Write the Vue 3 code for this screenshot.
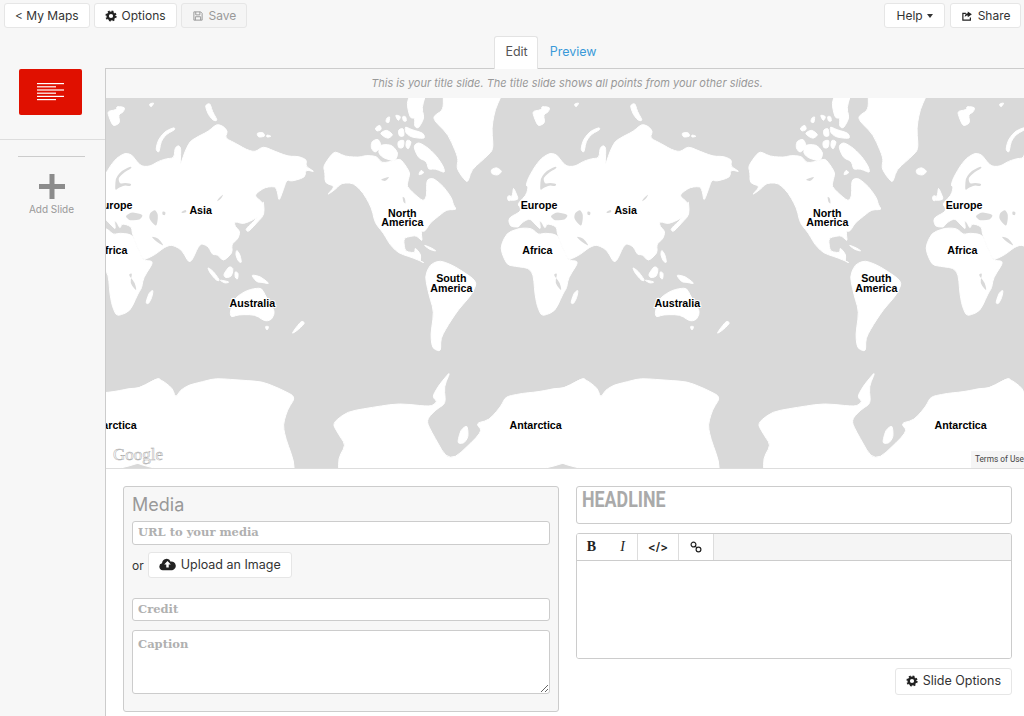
<script setup>
const offsets = [-2550, -1275, 0, 1275]

// the traced outlines are plain polygons, this rounds every corner a little
function smooth(d) {
  const n = d.replace(/[MZ]/g, '').trim().split(/\s+/).map(Number)
  const pts = []
  for (let i = 0; i < n.length; i += 2) pts.push([n[i], n[i + 1]])
  const mix = (a, b, t) => `${(a[0] + (b[0] - a[0]) * t).toFixed(1)} ${(a[1] + (b[1] - a[1]) * t).toFixed(1)}`
  let out = ''
  pts.forEach((p, i) => {
    const prev = pts[(i + pts.length - 1) % pts.length]
    const next = pts[(i + 1) % pts.length]
    out += `${i ? 'L' : 'M'}${mix(p, prev, 0.35)} Q${p[0]} ${p[1]} ${mix(p, next, 0.35)} `
  })
  return out + 'Z'
}

// old world, traced around the copy at x 500..740 of the page
const oldWorld = [
  'M25 360 60 342 62 330 52 318 78 292 85 268 78 262 85 240 105 205 125 180 150 165 170 170 185 190 200 205 225 205 250 190 275 182 297 180 300 150 310 142 318 150 315 205 330 160 345 130 370 115 400 100 425 78 445 85 458 100 450 120 480 135 515 155 540 162 565 145 600 160 640 175 670 175 695 185 692 205 720 222 692 215 690 238 650 250 635 245 625 275 612 310 607 280 600 265 570 268 545 285 540 295 565 315 560 350 535 365 505 378 478 370 480 385 495 400 490 420 480 430 470 440 472 465 445 490 428 470 412 470 400 445 375 435 345 500 320 455 290 440 268 448 240 470 205 487 185 440 172 408 170 388 155 380 140 378 135 392 125 372 118 368 122 395 105 378 90 362 75 368 62 378 55 388 30 385Z',
  // africa
  'M0 450 20 405 60 390 95 391 115 410 135 405 172 410 185 445 205 487 237 490 205 540 200 570 190 585 165 640 125 655 112 625 105 590 100 530 85 510 45 505 20 500Z',
  // australia
  'M465 640 480 600 510 580 535 572 560 570 575 600 600 640 590 665 570 670 540 650 490 650 468 658Z',
  // britain, ireland, svalbard and the rest
  'M40 268 48 285 56 305 28 308 38 290Z',
  'M22 295 32 292 32 308 24 308Z',
  'M97 40 125 35 125 25 150 28 145 42 130 50 135 75 115 85 105 65Z',
  'M222 18 238 14 228 28Z',
  'M390 22 405 15 412 40 428 68 415 68 400 50Z',
  'M298 88 270 100 250 125 242 155 252 165 258 130 275 108 300 95Z',
  'M545 105 565 103 570 115 550 118Z',
  'M575 110 590 115 575 118Z',
  'M565 305 568 350 545 375 520 402 512 395 520 385 545 362 558 340Z',
  'M397 507 415 520 435 548 425 548 405 525Z',
  'M445 530 462 505 475 510 470 535 452 540Z',
  'M432 545 465 552 450 556Z',
  'M480 520 490 525 488 545 480 538Z',
  'M485 455 495 470 500 495 490 490 482 470Z',
  'M528 530 555 535 585 558 560 553 545 552Z',
  'M570 685 582 685 576 698Z',
  'M680 668 690 675 670 695 650 708 662 690Z',
  'M212 615 222 585 235 575 230 600 220 618Z',
].map(smooth)

const oldWorldWater = [
  'M228 415 250 420 268 445 245 432Z',
  'M225 345 240 335 250 350 245 385 232 375 222 360Z',
  'M262 340 272 342 270 352 262 350Z',
  'M445 288 440 300 425 312 430 302Z',
  'M318 342 332 335 335 342 322 346Z',
  'M150 355 170 342 205 350 195 365 165 368Z',
  'M168 205 140 218 122 240 120 278 133 268 150 262 165 265 170 258 150 254 135 258 129 240 150 222 170 210Z',
  'M160 530 172 525 165 555 185 580 180 555Z',
].map(smooth)

// americas, traced around the copy at x 740..980 of the page
const newWorld = [
  'M25 205 45 175 60 160 90 175 130 178 155 172 185 175 200 195 230 190 255 182 270 200 285 225 280 245 275 265 300 290 325 310 335 295 335 245 355 240 385 265 410 300 415 320 425 335 395 335 370 355 345 375 330 400 318 400 322 430 312 420 300 412 265 420 270 460 300 465 300 448 318 470 315 490 330 495 295 480 250 465 225 440 205 405 180 375 170 330 145 285 115 255 80 255 60 275 35 292 60 265 30 255 30 225Z',
  // south america
  'M330 535 345 500 375 487 420 505 487 550 470 590 430 635 400 680 377 721 377 761 352 751 347 711 357 641 342 591Z',
  // greenland, its top edge runs off the map
  'M385 -20 565 -20 540 35 530 90 535 155 510 180 470 215 458 255 440 235 425 210 430 180 400 110 360 70 355 55 385 35Z',
  // arctic islands
  'M275 15 290 -20 335 -20 320 30 328 60 310 92 298 85 300 60 285 60Z',
  'M180 90 195 80 200 95 185 100Z',
  'M195 105 215 95 235 110 220 122 205 115Z',
  'M170 130 190 122 200 145 180 165 168 150Z',
  'M215 60 225 55 222 75 212 72Z',
  'M240 50 258 55 250 70Z',
  'M262 55 272 55 275 70 265 70Z',
  'M250 95 265 90 268 115 252 115Z',
  'M270 85 290 95 325 105 330 122 290 118 272 105Z',
  'M195 140 230 140 250 165 240 190 205 180 190 165Z',
  'M248 130 268 125 265 150 250 150Z',
  'M275 125 290 130 280 155 272 145Z',
  'M295 145 310 132 340 150 365 175 385 205 390 225 360 212 340 215 335 190 310 180Z',
  'M318 215 328 225 310 232Z',
  // iceland, cuba
  'M528 215 545 208 562 220 548 232 530 228Z',
  'M325 440 350 450 365 460 345 455Z',
].map(smooth)

const newWorldWater = [
  'M262 295 270 300 272 318 265 312Z',
  'M195 245 225 235 212 250Z',
].map(smooth)

// ends overlap the next copy so the seam does not show
const antarctica = [
  'M-60 885 0 880 55 850 75 860 100 880 110 908 125 885 150 870 190 860 230 850 300 855 370 860 420 880 470 905 445 945 432 990 440 1030 465 1100 465 1145 600 1145 598 1090 620 1050 600 1020 580 985 625 950 700 937 780 925 875 935 895 920 880 905 900 870 935 828 915 875 920 925 890 945 866 970 866 990 931 1105 1031 1010 1011 985 1050 975 1085 935 1100 905 1150 895 1200 890 1250 880 1275 880 1330 850 1340 852 1340 1145 -60 1145Z',
  'M955 1045 965 1005 985 990 988 1025 975 1045Z',
].map(smooth)

const labels = [
  { text: 'Asia', x: 185, y: 356 },
  { text: 'Europe', x: -75, y: 343 },
  { text: 'Africa', x: -80, y: 478 },
  { text: 'North', x: 790, y: 365 },
  { text: 'America', x: 790, y: 393 },
  { text: 'South', x: 937, y: 560 },
  { text: 'America', x: 937, y: 590 },
  { text: 'Australia', x: 340, y: 636 },
  { text: 'Antarctica', x: 1190, y: 1001 },
]
</script>

<template>
  <div class="page">
    <header class="topbar">
      <div class="btn-row">
        <button class="btn">&lt; My Maps</button>
        <button class="btn">
          <svg class="ico" viewBox="0 0 16 16"><circle cx="8" cy="8" r="4.4" fill="none" stroke="#222" stroke-width="3.2"/><circle cx="8" cy="8" r="6.3" fill="none" stroke="#222" stroke-width="2.4" stroke-dasharray="2.5 2.45"/></svg>
          Options
        </button>
        <button class="btn disabled">
          <svg class="ico" viewBox="0 0 16 16"><path d="M2.5 2.5h9l2 2v9h-11zM5 2.5v4h5.5v-4M4.5 13.5v-4.5h7v4.5" fill="none" stroke="#999" stroke-width="1.3"/></svg>
          Save
        </button>
      </div>
      <div class="btn-row">
        <button class="btn help">Help <i class="caret"></i></button>
        <button class="btn share">
          <svg class="ico" viewBox="0 0 16 16"><path d="M12.5 10v3.5h-10v-9h4" fill="none" stroke="#222" stroke-width="1.6"/><path d="M9 2l5.5 3.8L9 9.6V7.4c-2 0-3.3.6-4 2.2 0-3.4 1.6-5.2 4-5.4z" fill="#222"/></svg>
          Share
        </button>
      </div>
    </header>

    <nav class="tabs">
      <span class="tab active">Edit</span>
      <span class="tab">Preview</span>
    </nav>

    <div class="main">
      <aside class="sidebar">
        <div class="slides">
          <div class="thumb">
            <svg width="27" height="19" viewBox="0 0 27 19"><g fill="#fff"><rect y="0" width="27" height="1.2"/><rect y="3.2" width="19" height="1.2"/><rect y="6.4" width="27" height="1.2"/><rect y="9.6" width="19" height="1.2"/><rect y="12.8" width="27" height="1.2"/><rect y="16" width="19" height="1.2"/></g></svg>
          </div>
        </div>
        <div class="add-slide">
          <svg width="26" height="25" viewBox="0 0 26 25"><path d="M10.5 0h5v10h10.500v5H15.500v10h-5V15H0v-5h10.500z" fill="#8c8c8c"/></svg>
          <span>Add Slide</span>
        </div>
      </aside>

      <section class="editor">
        <div class="hint">This is your title slide. The title slide shows all points from your other slides.</div>
        <div class="map">
          <svg class="world" viewBox="-1374 9 2754 1110" preserveAspectRatio="none">
            <rect x="-1374" y="9" width="2754" height="1110" fill="#d9d9d9"/>
            <g v-for="x in offsets" :key="x" :transform="`translate(${x} 0)`">
              <g transform="translate(-192 9)">
                <path v-for="d in oldWorld" :key="d" :d="d" class="land"/>
                <path v-for="d in oldWorldWater" :key="d" :d="d" fill="#d9d9d9"/>
              </g>
              <g transform="translate(528 9)">
                <path v-for="d in newWorld" :key="d" :d="d" class="land"/>
                <path v-for="d in newWorldWater" :key="d" :d="d" fill="#d9d9d9"/>
              </g>
              <path v-for="d in antarctica" :key="d" :d="d" class="land"/>
            </g>
            <g v-for="x in offsets" :key="x" :transform="`translate(${x} 0)`">
              <text v-for="l in labels" :key="l.text + l.y" class="label" :x="l.x" :y="l.y">{{ l.text }}</text>
            </g>
          </svg>
          <span class="google">Google</span>
          <span class="terms">Terms of Use</span>
        </div>

        <div class="form">
          <div class="media">
            <h3>Media</h3>
            <input class="field" placeholder="URL to your media">
            <div class="upload">
              <span>or</span>
              <button class="btn">
                <svg class="cloud" viewBox="0 0 18 14"><path d="M4 13.500a3.700 3.700 0 0 1-.8-7.300A4.800 4.800 0 0 1 12.400 4.500a4.500 4.500 0 0 1 1.600 9z" fill="#222"/><path d="M9 3.800l3.500 3.700h-2.200v3.300H7.700V7.500H5.500z" fill="#fff"/></svg>
                Upload an Image
              </button>
            </div>
            <input class="field credit" placeholder="Credit">
            <textarea class="field caption" placeholder="Caption"></textarea>
          </div>

          <div class="text-col">
            <div class="headline"><span>HEADLINE</span></div>
            <div class="wysiwyg">
              <div class="toolbar">
                <div class="tool-group bi"><b>B</b><i>I</i></div>
                <div class="tool-group code">&lt;/&gt;</div>
                <div class="tool-group link">
                  <svg width="12" height="12" viewBox="0 0 13 13"><g fill="none" stroke="#222" stroke-width="1.300"><circle cx="3.800" cy="3.800" r="2.600"/><circle cx="9.200" cy="9.200" r="2.600"/><path d="M5.500 5.500l2 2"/></g></svg>
                </div>
              </div>
              <div class="wysiwyg-body"></div>
            </div>
            <div class="slide-options">
              <button class="btn">
                <svg class="ico" viewBox="0 0 16 16"><circle cx="8" cy="8" r="4.4" fill="none" stroke="#222" stroke-width="3.2"/><circle cx="8" cy="8" r="6.3" fill="none" stroke="#222" stroke-width="2.4" stroke-dasharray="2.5 2.45"/></svg>
                Slide Options
              </button>
            </div>
          </div>
        </div>
      </section>
    </div>
  </div>
</template>

<style>
html, body { margin: 0; }
</style>

<style scoped>
.page {
  width: 1024px;
  height: 716px;
  overflow: hidden;
  display: flex;
  flex-direction: column;
  background: #f7f7f7;
  font-family: Inter, "Open Sans", sans-serif;
  color: #333;
}
.topbar {
  display: flex;
  justify-content: space-between;
  padding: 3px 3px 0 4px;
  height: 33px;
  box-sizing: border-box;
}
.btn-row {
  display: flex;
  gap: 4px;
  align-items: flex-start;
}
.btn {
  height: 25px;
  padding: 0 10px;
  display: inline-flex;
  align-items: center;
  gap: 5px;
  background: #fff;
  border: 1px solid #e6e6e6;
  border-radius: 3px;
  font: 12px Inter, "Open Sans", sans-serif;
  color: #333;
  white-space: nowrap;
}
.btn.disabled {
  background: #f5f5f5;
  color: #999;
}
.btn.help {
  padding: 0 11px;
  margin-right: 1px;
}
.btn.share {
  padding: 0 9.500px 0 10px;
}
.ico {
  width: 12px;
  height: 12px;
}
.caret {
  display: inline-block;
  border-top: 4px solid #333;
  border-left: 3.500px solid transparent;
  border-right: 3.500px solid transparent;
  margin-left: -1px;
}
.tabs {
  display: flex;
  justify-content: center;
  height: 35px;
  padding: 3px 0 0 80px;
  box-sizing: border-box;
}
.tab {
  height: 33px;
  box-sizing: border-box;
  padding: 0 12px 0 11px;
  line-height: 30px;
  font-size: 12.500px;
  color: #3a9ad9;
  border: 1px solid transparent;
  border-bottom: 0;
}
.tab.active {
  padding: 0 9px 0 10px;
  color: #555;
  background: #fff;
  border-color: #e3e3e3;
  border-radius: 3px 3px 0 0;
  position: relative;
  z-index: 1;
}
.main {
  flex: 1;
  display: flex;
  min-height: 0;
}
.sidebar {
  width: 105px;
  flex: none;
}
.slides {
  height: 70px;
  padding: 1px 0 0 19px;
  border-bottom: 1px solid #ddd;
}
.thumb {
  width: 63px;
  height: 46px;
  border-radius: 2px;
  background: #e01000;
  display: flex;
  align-items: center;
  justify-content: center;
}
.add-slide {
  margin: 16px 20px 0 18px;
  border-top: 1px solid #ccc;
  padding-top: 17px;
  display: flex;
  flex-direction: column;
  align-items: center;
  gap: 4px;
}
.add-slide span {
  font-size: 10px;
  color: #999;
}
.editor {
  flex: 1;
  min-width: 0;
  border-left: 1px solid #ccc;
  border-top: 1px solid #ccc;
  display: flex;
  flex-direction: column;
}
.hint {
  height: 29px;
  line-height: 29px;
  padding-left: 4px;
  text-align: center;
  font-size: 11px;
  font-style: italic;
  color: #999;
}
.map {
  position: relative;
  height: 370px;
  overflow: hidden;
}
.world {
  display: block;
  width: 100%;
  height: 100%;
}
.land {
  fill: #fff;
  stroke: #fff;
  stroke-width: 3px;
  stroke-linejoin: round;
}
.label {
  font: bold 32px "Liberation Sans", Arial, sans-serif;
  text-anchor: middle;
  fill: #000;
  stroke: #fff;
  stroke-width: 6px;
  paint-order: stroke;
}
.google {
  position: absolute;
  left: 7px;
  bottom: 3px;
  font: 17px "Liberation Serif", serif;
  color: #fff;
  -webkit-text-stroke: 0.5px #aaa;
}
.terms {
  position: absolute;
  right: 0;
  bottom: 0;
  padding: 0 0 0 4px;
  height: 17px;
  font: 8.300px/17px Roboto, sans-serif;
  background: #f5f5f5;
  color: #444;
}
.form {
  flex: 1;
  display: flex;
  gap: 17px;
  padding: 17px 12px 0 17px;
  background: #fff;
  border-top: 1px solid #ddd;
  min-height: 0;
}
.media {
  width: 436px;
  height: 226px;
  flex: none;
  box-sizing: border-box;
  padding: 7px 8px 0;
  background: #f7f7f7;
  border: 1px solid #ccc;
  border-radius: 3px;
  display: flex;
  flex-direction: column;
}
.media h3 {
  margin: 0 0 6px;
  font-size: 18px;
  font-weight: 400;
  line-height: 21px;
  color: #999;
}
.field {
  display: block;
  width: 100%;
  box-sizing: border-box;
  height: 24px;
  padding: 0 5px 2px;
  background: #fff;
  border: 1px solid #ccc;
  border-radius: 3px;
  font: bold 11.500px "DejaVu Serif", serif;
  outline: none;
}
.field::placeholder {
  color: #b0b0b0;
}
.upload {
  display: flex;
  align-items: center;
  gap: 4px;
  margin-top: 7px;
  height: 26px;
  font-size: 12px;
}
.cloud {
  width: 17px;
  height: 14px;
}
.upload .btn {
  height: 26px;
  padding: 0 10px 2px;
  font-size: 12.500px;
}
.credit {
  margin-top: 20px;
  height: 23px;
}
.caption {
  margin-top: 9px;
  height: 64px;
  padding-top: 6px;
  resize: vertical;
}
.text-col {
  flex: 1;
  min-width: 0;
  display: flex;
  flex-direction: column;
}
.headline {
  height: 38px;
  box-sizing: border-box;
  padding-left: 5px;
  background: #fff;
  border: 1px solid #ccc;
  border-radius: 3px;
  font: bold 22px/26px Roboto, sans-serif;
  color: #aaa;
}
.headline span {
  display: inline-block;
  transform: scaleX(.81);
  transform-origin: left;
}
.wysiwyg {
  margin-top: 9px;
  height: 126px;
  box-sizing: border-box;
  border: 1px solid #ccc;
  border-radius: 3px;
  display: flex;
  flex-direction: column;
  overflow: hidden;
}
.toolbar {
  height: 26px;
  flex: none;
  display: flex;
  background: #f5f5f5;
  border-bottom: 1px solid #ccc;
}
.tool-group {
  background: #fff;
  border-right: 1px solid #ddd;
  display: flex;
  align-items: center;
  justify-content: center;
  color: #222;
  box-sizing: border-box;
}
.bi {
  width: 61px;
  gap: 21px;
  font: 14px "Liberation Serif", serif;
}
.bi b, .bi i {
  width: 10px;
  text-align: center;
}
.code {
  width: 41px;
  font-size: 11.500px;
  font-weight: 600;
}
.link {
  width: 35px;
}
.wysiwyg-body {
  flex: 1;
  background: #fff;
}
.slide-options {
  display: flex;
  justify-content: flex-end;
  margin-top: 9px;
}
.slide-options .btn {
  height: 27px;
  padding: 0 10px 2px;
  font-size: 12.500px;
}
</style>
